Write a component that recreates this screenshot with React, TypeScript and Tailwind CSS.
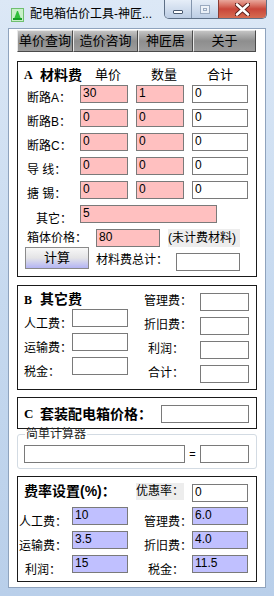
import React from 'react';

// small helper for the edit boxes of the form
const Field: React.FC<{ w: string; bg?: string; value?: string; className?: string }> = ({
  w,
  bg = 'bg-white',
  value = '',
  className = '',
}) => (
  <div
    className={`h-[18px] ${w} ${bg} shrink-0 border border-[#7a7a7a] pl-[2px] text-[12px] leading-[15px] font-['Liberation_Sans',sans-serif] ${className}`}
  >
    {value}
  </div>
);

const Label: React.FC<{ w: string; className?: string; children: React.ReactNode }> = ({ w, className = '', children }) => (
  <div className={`h-[18px] ${w} shrink-0 whitespace-nowrap text-[12px] leading-[18px] ${className}`}>{children}</div>
);

const Tab: React.FC<{ w: string; children: React.ReactNode }> = ({ w, children }) => (
  <div
    className={`${w} h-[22px] shrink-0 border border-t-[#e8e8e8] border-l-[#e8e8e8] border-r-[#4a4a4a] border-b-[#4a4a4a] bg-gradient-to-b from-[#c4c4c4] via-[#8e8e8e] to-[#9c9c9c] text-center text-[13px] leading-[20px]`}
  >
    {children}
  </div>
);

const TitleBar: React.FC = () => (
  <div className="flex h-[28px] items-start">
    <svg className="ml-[11px] mt-[8px]" width="13" height="14" viewBox="0 0 13 14">
      <rect x="0.5" y="0.5" width="12" height="13" fill="#c8f0c8" stroke="#6fbf6f" />
      <path d="M3 11 L6 3 L7 3 L10 11 Z" fill="#2fbf3a" />
      <rect x="2" y="10" width="9" height="2" fill="#16a025" />
    </svg>
    <div className="ml-[6px] mt-[6px] text-[12px] leading-[16px] text-black">配电箱估价工具-神匠...</div>
    <div className="ml-auto mr-[7px] flex h-[19px] overflow-hidden rounded-b-[5px] border border-t-0 border-[#5d6f86]">
      <div className="flex w-[26px] items-center justify-center bg-gradient-to-b from-[#e6eef8] to-[#bccde4]">
        <div className="mt-[5px] h-[4px] w-[10px] rounded-[1px] border border-[#4a5a70] bg-white" />
      </div>
      <div className="flex w-[27px] items-center justify-center border-l border-[#8395ad] bg-gradient-to-b from-[#e6eef8] to-[#bccde4]">
        <div className="h-[9px] w-[10px] border border-[#9aaac0] bg-white/60">
          <div className="mx-auto mt-[2px] h-[3px] w-[4px] border border-[#9aaac0]" />
        </div>
      </div>
      <div className="flex w-[48px] items-center justify-center border-l border-[#8a3c34] bg-gradient-to-b from-[#e8a79c] via-[#c9463a] to-[#d66c52]">
        <svg width="15" height="13" viewBox="0 0 15 13">
          <path d="M2 1.5 L13 11.5 M13 1.5 L2 11.5" stroke="#5b1f1a" strokeWidth="4.5" strokeLinecap="round" />
          <path d="M2 1.5 L13 11.5 M13 1.5 L2 11.5" stroke="#ffffff" strokeWidth="2.6" strokeLinecap="round" />
        </svg>
      </div>
    </div>
  </div>
);

const MaterialSection: React.FC = () => {
  const rows = [
    { label: '断路A：', a: '30', b: '1', c: '0' },
    { label: '断路B：', a: '0', b: '0', c: '0' },
    { label: '断路C：', a: '0', b: '0', c: '0' },
    { label: '导 线：', a: '0', b: '0', c: '0' },
    { label: '搪 锡：', a: '0', b: '0', c: '0' },
  ];
  return (
    <div className="ml-[8px] mt-[9px] h-[216px] w-[240px] border border-[#1a1a1a]">
      {/* header */}
      <div className="flex h-[23px] items-end pb-[2px] text-[13px] leading-[16px]">
        <span className="w-[22px] shrink-0 pl-[6px] font-['Liberation_Serif',serif] text-[12px] font-bold">A</span>
        <span className="w-[55px] shrink-0 text-[14px] font-bold">材料费</span>
        <span className="w-[56px] shrink-0">单价</span>
        <span className="w-[56px] shrink-0">数量</span>
        <span className="shrink-0">合计</span>
      </div>
      {rows.map((r) => (
        <div key={r.label} className="flex h-[24px] items-start pl-[9px]">
          <Label w="w-[53px]" className="mt-[4px]">
            {r.label}
          </Label>
          <Field w="w-[48px]" bg="bg-[#ffc0c0]" value={r.a} />
          <Field w="w-[48px]" bg="bg-[#ffc0c0]" value={r.b} className="ml-[8px]" />
          <Field w="w-[56px]" value={r.c} className="ml-[8px]" />
        </div>
      ))}
      <div className="flex h-[24px] items-start pl-[18px]">
        <Label w="w-[44px]" className="mt-[5px]">
          其它：
        </Label>
        <Field w="w-[137px]" bg="bg-[#ffc0c0]" value="5" />
      </div>
      <div className="flex h-[18px] items-start pl-[9px]">
        <Label w="w-[69px]">箱体价格：</Label>
        <Field w="w-[64px]" bg="bg-[#ffc0c0]" value="80" />
        <div className="ml-[8px] h-[18px] w-[72px] bg-[#ededed] text-[12px] leading-[18px]">(未计费材料)</div>
      </div>
      <div className="flex h-[22px] items-start pl-[7px]">
        <div className="h-[22px] w-[64px] border border-[#8a8a8a] bg-gradient-to-b from-[#f7f7f7] via-[#e4e4e6] to-[#b4b4f4] text-center text-[13px] leading-[20px]">
          计算
        </div>
        <Label w="w-[80px]" className="ml-[7px] mt-[4px]">
          材料费总计：
        </Label>
        <Field w="w-[64px]" className="mt-[6px]" />
      </div>
    </div>
  );
};

const OtherSection: React.FC = () => (
  <div className="ml-[8px] mt-[8px] flex h-[105px] w-[240px] border border-[#1a1a1a]">
    <div className="w-[126px] shrink-0">
      <div className="flex h-[23px] items-center pl-[6px] pt-[4px]">
        <span className="w-[16px] font-['Liberation_Serif',serif] text-[12px] font-bold">B</span>
        <span className="text-[14px] font-bold">其它费</span>
      </div>
      {['人工费：', '运输费：', '税金：'].map((l) => (
        <div key={l} className="flex h-[24px] items-start pl-[6px]">
          <Label w="w-[48px]" className="mt-[6px]">
            {l}
          </Label>
          <Field w="w-[56px]" />
        </div>
      ))}
    </div>
    <div className="pt-[7px]">
      {['管理费：', '折旧费：', '利润：', '合计：'].map((l) => (
        <div key={l} className="flex h-[24px] items-start">
          <Label w="w-[44px]" className="mt-[-1px] text-center">
            {l}
          </Label>
          <Field w="w-[49px]" className="ml-[12px]" />
        </div>
      ))}
    </div>
  </div>
);

const PackSection: React.FC = () => (
  <div className="ml-[8px] mt-[7px] flex h-[32px] w-[240px] items-start border border-[#1a1a1a] pt-[7px]">
    <span className="w-[22px] shrink-0 pl-[6px] font-['Liberation_Serif',serif] text-[13px] font-bold leading-[18px]">C</span>
    <span className="w-[121px] shrink-0 text-[14px] font-bold leading-[18px]">套装配电箱价格：</span>
    <Field w="w-[88px]" />
  </div>
);

const Calculator: React.FC = () => (
  <fieldset className="ml-[8px] w-[240px] rounded-[3px] border border-[#d3dbe3] px-[6px] pb-[5px]">
    <legend className="ml-[1px] px-[1px] text-[12px] leading-[10px] text-[#222]">简单计算器</legend>
    <div className="mt-[6px] flex items-start">
      <Field w="w-[161px]" />
      <div className="w-[15px] text-center text-[11px] leading-[18px]">=</div>
      <Field w="w-[49px]" />
    </div>
  </fieldset>
);

const RateSection: React.FC = () => {
  const rows = [
    { l: '人工费：', a: '10', r: '管理费：', b: '6.0' },
    { l: '运输费：', a: '3.5', r: '折旧费：', b: '4.0' },
    { l: '利润：', a: '15', r: '税金：', b: '11.5' },
  ];
  return (
    <div className="ml-[8px] mt-[7px] h-[106px] w-[240px] border border-[#1a1a1a] pt-[6px]">
      <div className="flex h-[18px] items-start">
        <span className="w-[118px] shrink-0 pl-[6px] text-[14px] font-bold leading-[16px]">费率设置(%)：</span>
        <div className="h-[17px] w-[48px] shrink-0 bg-[#ededed] text-center text-[12px] leading-[17px]">优惠率：</div>
        <Field w="w-[56px]" value="0" className="ml-[8px] mt-[1px]" />
      </div>
      <div className="h-[6px]" />
      {rows.map((r) => (
        <div key={r.l} className="flex h-[24px] items-start">
          <Label w="w-[50px]" className="mt-[6px] text-center">
            {r.l}
          </Label>
          <Field w="w-[56px]" bg="bg-[#c0c0ff]" value={r.a} className="ml-[4px]" />
          <Label w="w-[44px]" className="ml-[16px] mt-[6px] text-center">
            {r.r}
          </Label>
          <Field w="w-[56px]" bg="bg-[#c0c0ff]" value={r.b} className="ml-[4px]" />
        </div>
      ))}
    </div>
  );
};

export default function App() {
  return (
    <div className="h-[596px] w-[274px] overflow-hidden bg-gradient-to-b from-[#dce8f6] via-[#c6d9ef] to-[#b9cfea] font-['Liberation_Sans','Noto_Sans_CJK_SC',sans-serif] text-black">
      <TitleBar />
      <div className="ml-[8px] h-[560px] w-[258px] border border-[#8fa3bd] bg-white">
        <div className="ml-[8px] mt-[1px] flex">
          <Tab w="w-[56px]">单价查询</Tab>
          <Tab w="w-[65px]">造价咨询</Tab>
          <Tab w="w-[55px]">神匠居</Tab>
          <Tab w="w-[63px]">关于</Tab>
        </div>
        <MaterialSection />
        <OtherSection />
        <PackSection />
        <Calculator />
        <RateSection />
      </div>
    </div>
  );
}
